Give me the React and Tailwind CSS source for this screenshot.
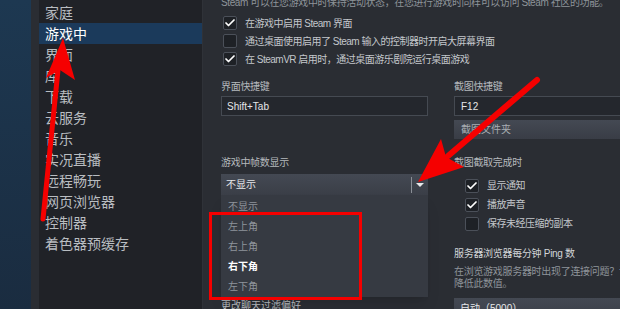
import { Check } from 'lucide-react';

const font = { fontFamily: '"Liberation Sans", "Noto Sans CJK SC", sans-serif' };

const navItems = ['家庭', '游戏中', '界面', '库', '下载', '云服务', '音乐', '实况直播', '远程畅玩', '网页浏览器', '控制器', '着色器预缓存'];

function Box({ checked }) {
  return (
    <div className="w-[14px] h-[14px] shrink-0 rounded-[2px] border border-[#4b5059] bg-[#1e2126] flex items-center justify-center">
      {checked && <Check size={12} strokeWidth={3.5} className="text-white" />}
    </div>
  );
}

function CheckRow({ checked, label, h = 'h-[18px]' }) {
  return (
    <div className={`${h} flex items-center gap-[8px]`}>
      <Box checked={checked} />
      <span className="text-[10px] tracking-[-0.5px] text-[#c3c7cb] whitespace-nowrap">{label}</span>
    </div>
  );
}

export default function App() {
  return (
    <div style={font} className="relative w-[620px] h-[309px] overflow-hidden flex bg-[#2a2d33]">
      {/* left blue strip */}
      <div className="w-[31px] shrink-0 bg-gradient-to-b from-[#1d3851] to-[#1a2c40]" />

      {/* sidebar */}
      <div className="w-[163px] ml-[8px] shrink-0 bg-[#202227] pt-[2px]">
        {navItems.map((item, i) => (
          <div
            key={item}
            className={`h-[21px] flex items-center pl-[6px] text-[14px] leading-none ${
              i === 1 ? 'bg-[#1b3a5b] text-white' : 'text-[#b9bdc1]'
            }`}
          >
            {item}
          </div>
        ))}
      </div>

      {/* content */}
      <div className="flex-1 pl-[18px] min-w-0 border-l border-[#2f3238]">
        <div className="-mt-[3px] h-[12px] leading-[12px] text-[10px] tracking-[-0.4px] text-[#8e949a] whitespace-nowrap">
          Steam 可以在您游戏中时保持活动状态，在您进行游戏时同样可以访问 Steam 社区的功能。
        </div>

        <div className="mt-[5px] pl-[2px]">
          <CheckRow checked label="在游戏中启用 Steam 界面" />
          <CheckRow label="通过桌面使用启用了 Steam 输入的控制器时开启大屏幕界面" />
          <CheckRow checked label="在 SteamVR 启用时，通过桌面游乐剧院运行桌面游戏" />
        </div>

        <div className="mt-[12px] flex gap-[26px]">
          {/* left column */}
          <div className="w-[207px] shrink-0 flex flex-col">
            <div className="h-[14px] leading-[14px] text-[10px] tracking-[-0.3px] text-[#b5b9bd]">界面快捷键</div>
            <div className="mt-[2px] h-[20px] border border-[#454a52] bg-[#24272d] flex items-center px-[5px] text-[10px] text-[#e4e6e8]">
              Shift+Tab
            </div>

            <div className="mt-[40px] h-[14px] leading-[14px] text-[10px] tracking-[-0.3px] text-[#b5b9bd]">游戏中帧数显示</div>
            <div className="relative mt-[4px]">
              <div className="h-[21px] bg-gradient-to-b from-[#444953] to-[#3a3e47] flex items-center pl-[5px] text-[10px] text-[#e6e8ea]">
                <span className="flex-1">不显示</span>
                <div className="w-px h-[16px] bg-[#8a8f96]" />
                <div className="w-[16px] flex justify-center">
                  <div className="w-0 h-0 border-l-[4px] border-r-[4px] border-t-[4px] border-l-transparent border-r-transparent border-t-[#e6e8ea]" />
                </div>
              </div>
              <div className="absolute left-0 right-0 top-full z-10 h-[102px] bg-[#363a42] pt-[2px] shadow-lg">
                {['不显示', '左上角', '右上角', '右下角', '左下角'].map((o, i) => (
                  <div
                    key={o}
                    className={`h-[19.8px] flex items-center pl-[7px] text-[10px] ${
                      i === 3 ? 'text-white font-semibold' : 'text-[#8e949b]'
                    }`}
                  >
                    {o}
                  </div>
                ))}
              </div>
            </div>
            <div className="mt-[104px] h-[14px] leading-[14px] text-[10px] text-[#b5b9bd] whitespace-nowrap">更改聊天过滤偏好</div>
          </div>

          {/* right column */}
          <div className="flex-1 flex flex-col min-w-0">
            <div className="h-[14px] leading-[14px] text-[10px] tracking-[-0.3px] text-[#b5b9bd]">截图快捷键</div>
            <div className="mt-[2px] h-[20px] border border-[#454a52] border-r-0 bg-[#24272d] flex items-center px-[6px] text-[10px] text-[#e4e6e8]">
              F12
            </div>
            <div className="mt-[4px] h-[19px] bg-gradient-to-b from-[#444953] to-[#393d46] flex items-center pl-[7px] text-[10px] text-[#a9aeb3]">
              截图文件夹
            </div>

            <div className="mt-[17px] h-[14px] leading-[14px] text-[10px] tracking-[-0.3px] text-[#b5b9bd]">截图截取完成时</div>
            <div className="mt-[6px] pl-[11px]">
              <CheckRow checked label="显示通知" h="h-[19px]" />
              <CheckRow checked label="播放声音" h="h-[19px]" />
              <CheckRow label="保存未经压缩的副本" h="h-[19px]" />
            </div>

            <div className="mt-[14px] h-[14px] leading-[14px] text-[10px] tracking-[-0.3px] text-[#d2d5d8] whitespace-nowrap">服务器浏览器每分钟 Ping 数</div>
            <div className="mt-[5px] text-[10px] leading-[12px] tracking-[-0.3px] text-[#8e949a] whitespace-nowrap">
              <div>在浏览游戏服务器时出现了连接问题？请</div>
              <div>降低此数值。</div>
            </div>
            <div className="mt-[8px] h-[21px] bg-gradient-to-b from-[#444953] to-[#3a3e47] flex items-center pl-[6px] text-[10px] text-[#e6e8ea]">
              自动（5000）
            </div>
          </div>
        </div>
      </div>

      {/* annotations */}
      <div className="absolute left-[209px] top-[212px] w-[153px] h-[88px] border-[3px] border-[#f50000] z-20" />
      <svg className="absolute inset-0 z-30 pointer-events-none" width="620" height="309" viewBox="0 0 620 309">
        <line x1="43" y1="219" x2="58" y2="70" stroke="#f50000" strokeWidth="5" strokeLinecap="round" />
        <polygon points="63,38 75,80 60,70 46,78" fill="#f50000" />
        <line x1="537" y1="80" x2="448" y2="156" stroke="#f50000" strokeWidth="6" strokeLinecap="round" />
        <polygon points="418,182 441,139 446,157 464,167" fill="#f50000" />
      </svg>
    </div>
  );
}
